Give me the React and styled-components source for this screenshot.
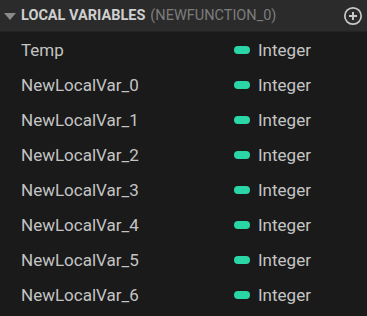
import React from 'react';
import styled, { createGlobalStyle } from 'styled-components';

const GlobalStyle = createGlobalStyle`
  html, body {
    margin: 0;
    padding: 0;
    background: #1a1a1a;
  }
  body {
    font-family: Roboto, "Liberation Sans", sans-serif;
  }
`;

const Panel = styled.div`
  width: 367px;
  height: 316px;
  background: #1a1a1a;
  overflow: hidden;
`;

const Header = styled.div`
  height: 31px;
  display: flex;
  align-items: center;
  padding: 0 4px 0 4px;
  background: #2b2b2b;
  border-bottom: 1px solid #232323;
`;

const Arrow = styled.span`
  width: 0;
  height: 0;
  border-left: 6px solid transparent;
  border-right: 6px solid transparent;
  border-top: 7px solid #8a8a8a;
  margin: 1px 5px 0 0;
`;

const Title = styled.span`
  font-size: 14.5px;
  font-weight: 700;
  color: #cfcfcf;
`;

const Sub = styled.span`
  font-size: 14.5px;
  color: #7d7d7d;
  margin-left: 5px;
  flex: 1;
`;

const AddButton = styled.svg`
  width: 20px;
  height: 20px;
`;

const Row = styled.div`
  height: 35px;
  display: flex;
  align-items: center;
  padding-left: 21px;
  font-size: 17px;
  color: #c4c4c4;
`;

const Name = styled.span`
  width: 213px;
`;

const Pill = styled.span`
  width: 16px;
  height: 8px;
  border-radius: 4px;
  background: ${({ color }) => color};
  margin-right: 8px;
`;

const vars = ['Temp', 'NewLocalVar_0', 'NewLocalVar_1', 'NewLocalVar_2', 'NewLocalVar_3', 'NewLocalVar_4', 'NewLocalVar_5', 'NewLocalVar_6'];

export default function App() {
  return (
    <Panel>
      <GlobalStyle />
      <Header>
        <Arrow />
        <Title>LOCAL VARIABLES</Title>
        <Sub>(NEWFUNCTION_0)</Sub>
        <AddButton viewBox="0 0 20 20">
          <circle cx="10" cy="10" r="8.2" fill="none" stroke="#c8c8c8" strokeWidth="1.7" />
          <path d="M10 6v8M6 10h8" stroke="#c8c8c8" strokeWidth="2" />
        </AddButton>
      </Header>
      {vars.map((v) => (
        <Row key={v}>
          <Name>{v}</Name>
          <Pill color="#2bd6a6" />
          Integer
        </Row>
      ))}
    </Panel>
  );
}
